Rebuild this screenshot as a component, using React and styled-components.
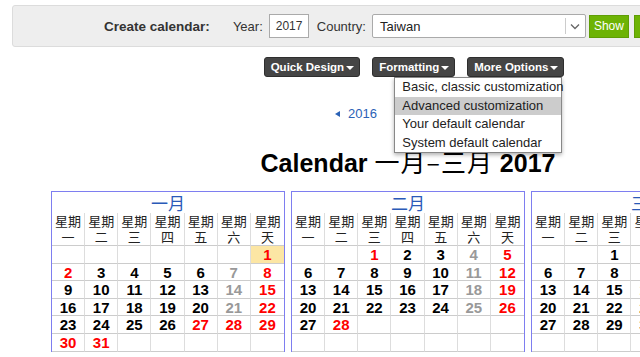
import React from "react"
import styled, { createGlobalStyle } from "styled-components"

const GlobalStyle = createGlobalStyle`
  html, body {
    margin: 0;
    padding: 0;
    background: #fff;
    overflow: hidden;
  }
  body {
    font-family: "Liberation Sans", Arial, "Noto Sans CJK TC", sans-serif;
    color: #222;
  }
`

const Page = styled.div`
  width: 816px;
  padding-top: 5px;
`

const Bar = styled.div`
  margin: 0 12px;
  height: 42px;
  box-sizing: border-box;
  background: #eeeeee;
  border: 1px solid #dcdcdc;
  border-radius: 3px;
  display: flex;
  align-items: center;
  justify-content: center;
  font-size: 13px;
  color: #333;
`

const BarTitle = styled.span`
  font-weight: bold;
  font-size: 13.5px;
  color: #333;
  margin-right: 23px;
`

const Label = styled.span`
  margin-right: 6px;
`

const Input = styled.div`
  width: 40px;
  height: 24px;
  box-sizing: border-box;
  background: #fff;
  border: 1px solid #aaa;
  font-size: 12px;
  line-height: 22px;
  padding-left: 6px;
  margin-right: 8px;
`

const Select = styled.div`
  width: 214px;
  height: 24px;
  box-sizing: border-box;
  background: #fff;
  border: 1px solid #aaa;
  border-radius: 2px;
  display: flex;
  align-items: center;
  margin-right: 3px;
`

const SelectText = styled.span`
  flex: 1;
  padding-left: 7px;
  font-size: 13px;
  color: #222;
`

const SelectArrow = styled.span`
  width: 19px;
  height: 16px;
  border-left: 1px solid #ccc;
  display: flex;
  align-items: center;
  justify-content: center;
`

const GreenButton = styled.div`
  height: 23px;
  box-sizing: border-box;
  padding: 0 4px;
  background: #6db304;
  border: 1px solid #5f9d05;
  color: #fff;
  font-size: 12px;
  line-height: 21px;
  text-align: center;
  margin-left: ${(p) => p.$gap || 0}px;
  ${(p) => (p.$width ? `width: ${p.$width}px;` : "")}
`

const ButtonRow = styled.div`
  margin-top: 10px;
  display: flex;
  justify-content: center;
  gap: 12px;
  padding-left: 12px;
`

const MenuWrap = styled.div`
  position: relative;
`

const DarkButton = styled.div`
  height: 20px;
  box-sizing: border-box;
  padding: 0 5px 0 6px;
  background: #454545;
  border: 1px solid #2e2e2e;
  border-radius: 3px;
  color: #fff;
  font-size: 11.5px;
  font-weight: bold;
  line-height: 18px;
  display: flex;
  align-items: center;
  gap: 2px;
`

const Caret = styled.span`
  width: 0;
  height: 0;
  border-left: 4px solid transparent;
  border-right: 4px solid transparent;
  border-top: 4px solid #fff;
  margin-top: 1px;
`

const Dropdown = styled.div`
  position: absolute;
  right: 2px;
  top: 100%;
  width: 168px;
  box-sizing: border-box;
  background: #fff;
  border: 1px solid #888;
  box-shadow: 0 2px 4px rgba(0, 0, 0, 0.3);
  z-index: 5;
`

const DropItem = styled.div`
  height: 18.5px;
  line-height: 18.5px;
  padding-left: 7px;
  font-size: 13px;
  color: #222;
  white-space: nowrap;
  background: ${(p) => (p.$active ? "#cccccc" : "transparent")};
`

const YearNav = styled.div`
  margin-top: 29px;
  display: flex;
  justify-content: center;
  gap: 58px;
  padding-right: 4px;
  font-size: 13px;
  line-height: 16px;
  color: #2b62b6;
`

const YearLink = styled.span`
  display: flex;
  align-items: center;
  gap: 8px;
`

const Tri = styled.span`
  width: 0;
  height: 0;
  border-top: 3.5px solid transparent;
  border-bottom: 3.5px solid transparent;
  ${(p) => (p.$dir === "left" ? "border-right: 5px solid #2b62b6;" : "border-left: 5px solid #2b62b6;")}
`

const Title = styled.h1`
  margin: 25px 0 0;
  text-align: center;
  font-size: 25px;
  line-height: 28px;
  font-weight: bold;
  color: #000;
  font-family: "Liberation Sans", Arial, "Noto Sans CJK TC", sans-serif;
`

const TitleCjk = styled.span`
  font-weight: normal;
  letter-spacing: 1px;
  font-family: "Noto Sans CJK TC", sans-serif;
`

const Months = styled.div`
  margin-top: 14px;
  display: flex;
  justify-content: center;
  gap: 6px;
`

const Month = styled.div`
  width: 234px;
  box-sizing: border-box;
  border: 1px solid #7e7ef0;
  border-bottom: none;
`

const MonthName = styled.div`
  height: 21px;
  line-height: 22px;
  text-align: center;
  font-size: 17px;
  color: #2a5ab8;
  font-family: "Noto Sans CJK TC", sans-serif;
`

const Grid = styled.div`
  display: grid;
  grid-template-columns: repeat(7, 1fr);
`

const HeadCell = styled.div`
  height: 33px;
  box-sizing: border-box;
  border-right: 1px solid #dddddd;
  border-bottom: 1px solid #cccccc;
  font-size: 13px;
  line-height: 16px;
  text-align: center;
  color: #222;
  font-family: "Noto Sans CJK TC", sans-serif;
  &:nth-child(7n) {
    border-right: none;
  }
`

const DayCell = styled.div`
  height: 17.6px;
  box-sizing: border-box;
  border-right: 1px solid #dddddd;
  border-bottom: 1px solid #cccccc;
  font-size: 15px;
  font-weight: bold;
  line-height: 17px;
  text-align: center;
  color: ${(p) => p.$color};
  background: ${(p) => (p.$hl ? "#fce6a4" : "transparent")};
  &:nth-child(7n) {
    border-right: none;
  }
`

const weekdays = ["一", "二", "三", "四", "五", "六", "天"]

const months = [
  { name: "一月", start: 6, days: 31, red: [2, 27, 28, 30, 31], hl: [1] },
  { name: "二月", start: 2, days: 28, red: [1, 28], hl: [] },
  { name: "三月", start: 2, days: 31, red: [], hl: [] },
]

const dayColor = (m, d, col) => {
  if (m.red.includes(d) || col === 6) return "#ff0000"
  if (col === 5) return "#999999"
  return "#000000"
}

const MonthTable = ({ month }) => {
  const cells = []
  for (let i = 0; i < 42; i++) {
    const d = i - month.start + 1
    const valid = d >= 1 && d <= month.days
    const col = i % 7
    cells.push(
      <DayCell
        key={i}
        $color={valid ? dayColor(month, d, col) : "#000"}
        $hl={valid && month.hl.includes(d)}
      >
        {valid ? d : ""}
      </DayCell>
    )
  }
  return (
    <Month>
      <MonthName>{month.name}</MonthName>
      <Grid>
        {weekdays.map((w) => (
          <HeadCell key={w}>
            星期
            <br />
            {w}
          </HeadCell>
        ))}
        {cells}
      </Grid>
    </Month>
  )
}

const App = () => (
  <Page>
    <GlobalStyle />
    <Bar>
      <BarTitle>Create calendar:</BarTitle>
      <Label>Year:</Label>
      <Input>2017</Input>
      <Label>Country:</Label>
      <Select>
        <SelectText>Taiwan</SelectText>
        <SelectArrow>
          <svg width="10" height="7" viewBox="0 0 10 7">
            <path d="M1 1.5 L5 5.5 L9 1.5" fill="none" stroke="#666" strokeWidth="1.3" />
          </svg>
        </SelectArrow>
      </Select>
      <GreenButton>Show</GreenButton>
      <GreenButton $gap={5} $width={78}>
        Download
      </GreenButton>
    </Bar>
    <ButtonRow>
      <DarkButton>
        Quick Design <Caret />
      </DarkButton>
      <DarkButton>
        Formatting <Caret />
      </DarkButton>
      <MenuWrap>
        <DarkButton>
          More Options <Caret />
        </DarkButton>
        <Dropdown>
          <DropItem>Basic, classic customization</DropItem>
          <DropItem $active>Advanced customization</DropItem>
          <DropItem>Your default calendar</DropItem>
          <DropItem>System default calendar</DropItem>
        </Dropdown>
      </MenuWrap>
    </ButtonRow>
    <YearNav>
      <YearLink>
        <Tri $dir="left" /> 2016
      </YearLink>
      <YearLink>
        2018 <Tri $dir="right" />
      </YearLink>
    </YearNav>
    <Title>
      Calendar <TitleCjk>一月–三月</TitleCjk> 2017
    </Title>
    <Months>
      {months.map((m) => (
        <MonthTable key={m.name} month={m} />
      ))}
    </Months>
  </Page>
)

export default App
